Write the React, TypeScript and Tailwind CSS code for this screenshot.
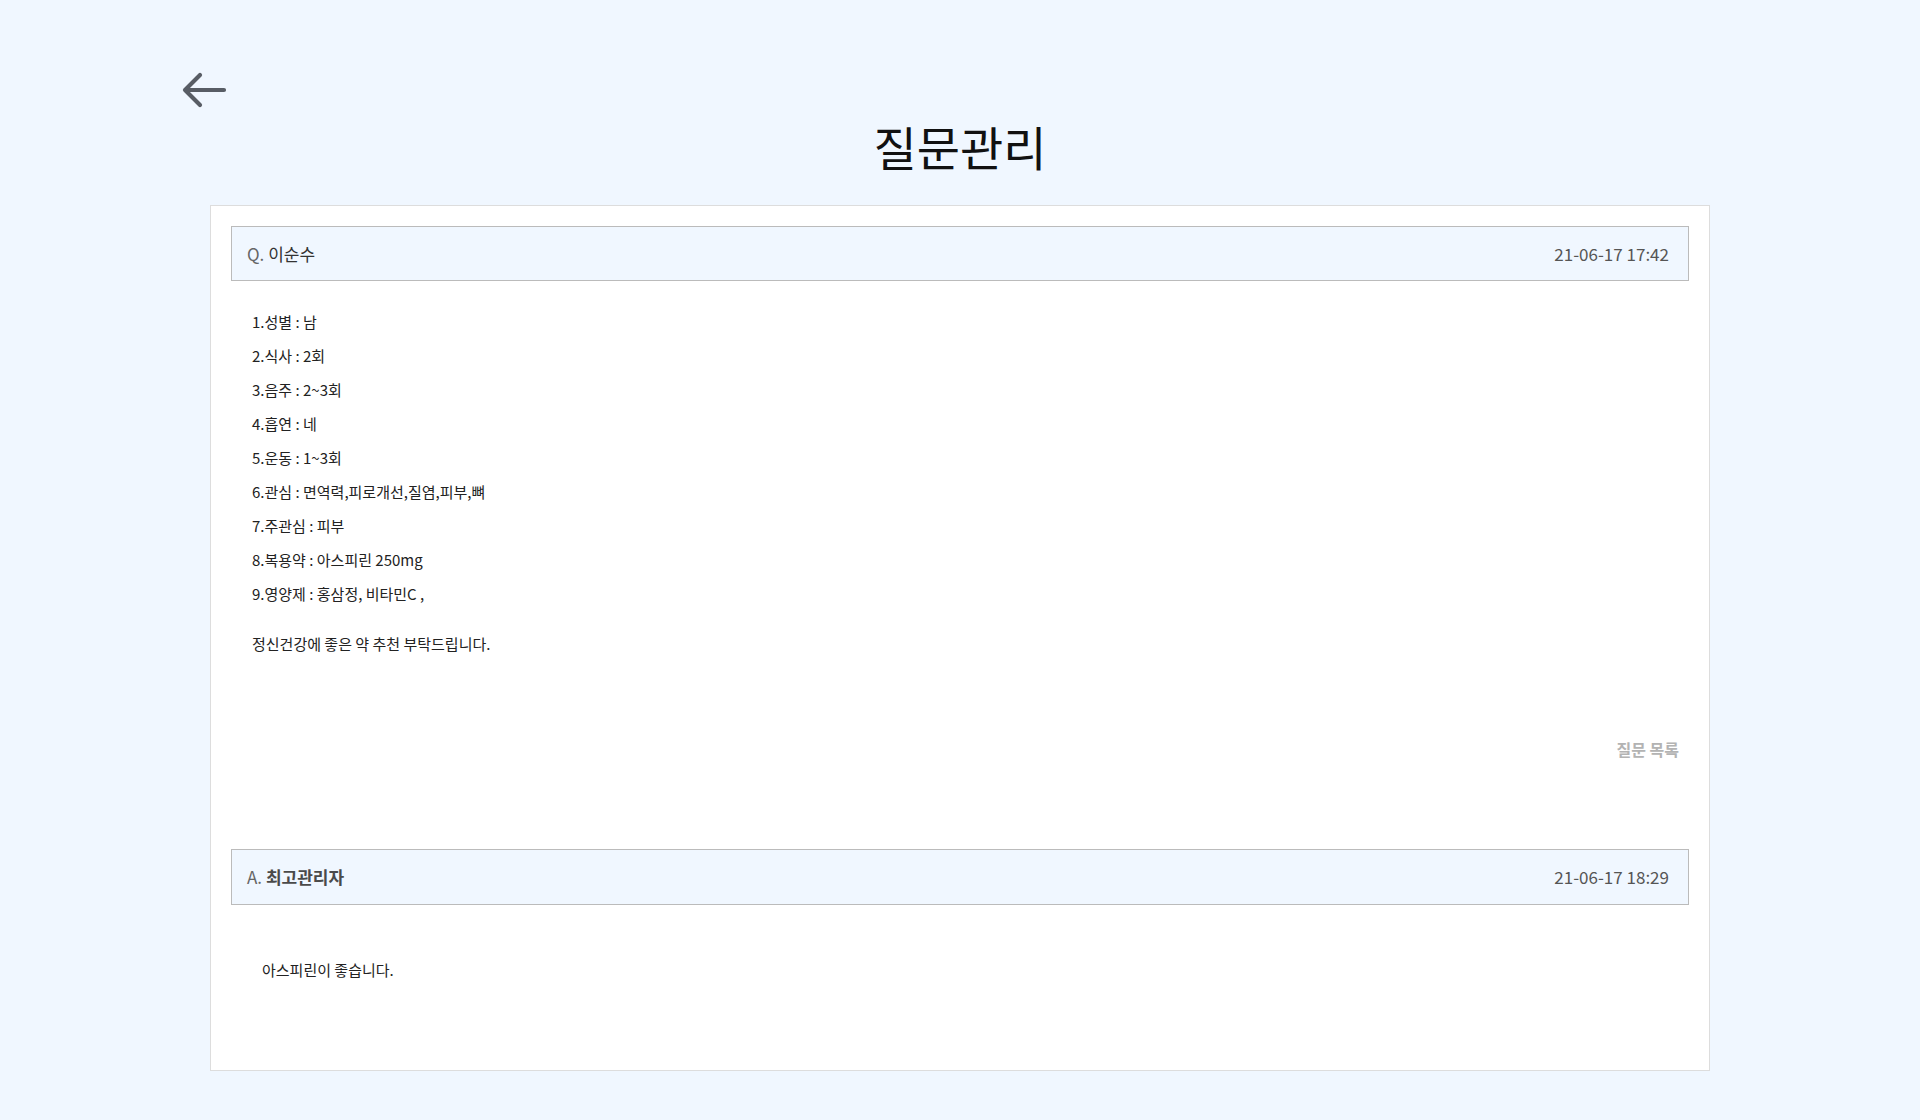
import React from "react";

const font = "font-['Noto_Sans_CJK_KR','Noto_Sans',sans-serif]";

function BackArrow() {
  return (
    <svg width="48" height="40" viewBox="0 0 48 40" fill="none" className="block">
      <path
        d="M44 20H5M20 5L5 20L20 35"
        stroke="#585d65"
        strokeWidth="4.2"
        strokeLinecap="round"
        strokeLinejoin="round"
      />
    </svg>
  );
}

const lines = [
  "1.성별 : 남",
  "2.식사 : 2회",
  "3.음주 : 2~3회",
  "4.흡연 : 네",
  "5.운동 : 1~3회",
  "6.관심 : 면역력,피로개선,질염,피부,뼈",
  "7.주관심 : 피부",
  "8.복용약 : 아스피린 250mg",
  "9.영양제 : 홍삼정, 비타민C ,",
];

export default function App() {
  return (
    <div className={`min-h-screen bg-[#f0f7ff] ${font}`}>
      <div className="w-[1560px] mx-auto pt-[70px]">
        <button className="block">
          <BackArrow />
        </button>
        <h1 className="mt-[13px] text-center text-[47px] leading-[46px] text-[#111]">질문관리</h1>
        <div className="mx-[30px] mt-[36px] border border-[#dddddd] bg-white px-[20px] pt-[20px] pb-[83px]">
          <div className="flex h-[55px] items-center justify-between border border-[#bbbbbb] bg-[#f0f7ff] pl-[15px] pr-[19px] text-[17px]">
            <div>
              <span className="text-[#666]">Q.</span> <span className="text-[#333]">이순수</span>
            </div>
            <div className="text-[#555]">21-06-17 17:42</div>
          </div>
          <div className="pl-[21px] pt-[24px] text-[15px] leading-[34px] text-[#222]">
            {lines.map((l) => (
              <p key={l}>{l}</p>
            ))}
            <p className="mt-[16px]">정신건강에 좋은 약 추천 부탁드립니다.</p>
          </div>
          <div className="mt-[78px] flex justify-end pr-[10px]">
            <a className="text-[16px] leading-[20px] font-bold text-[#b3b3b3] cursor-pointer">질문 목록</a>
          </div>
          <div className="mt-[90px] flex h-[56px] items-center justify-between border border-[#bbbbbb] bg-[#f0f7ff] pl-[15px] pr-[19px] text-[17px]">
            <div>
              <span className="text-[#666]">A.</span> <span className="font-bold text-[#4a4a4a]">최고관리자</span>
            </div>
            <div className="text-[#555]">21-06-17 18:29</div>
          </div>
          <div className="pl-[31px] pt-[48px] text-[15px] leading-[34px] text-[#222]">
            <p>아스피린이 좋습니다.</p>
          </div>
        </div>
      </div>
    </div>
  );
}
